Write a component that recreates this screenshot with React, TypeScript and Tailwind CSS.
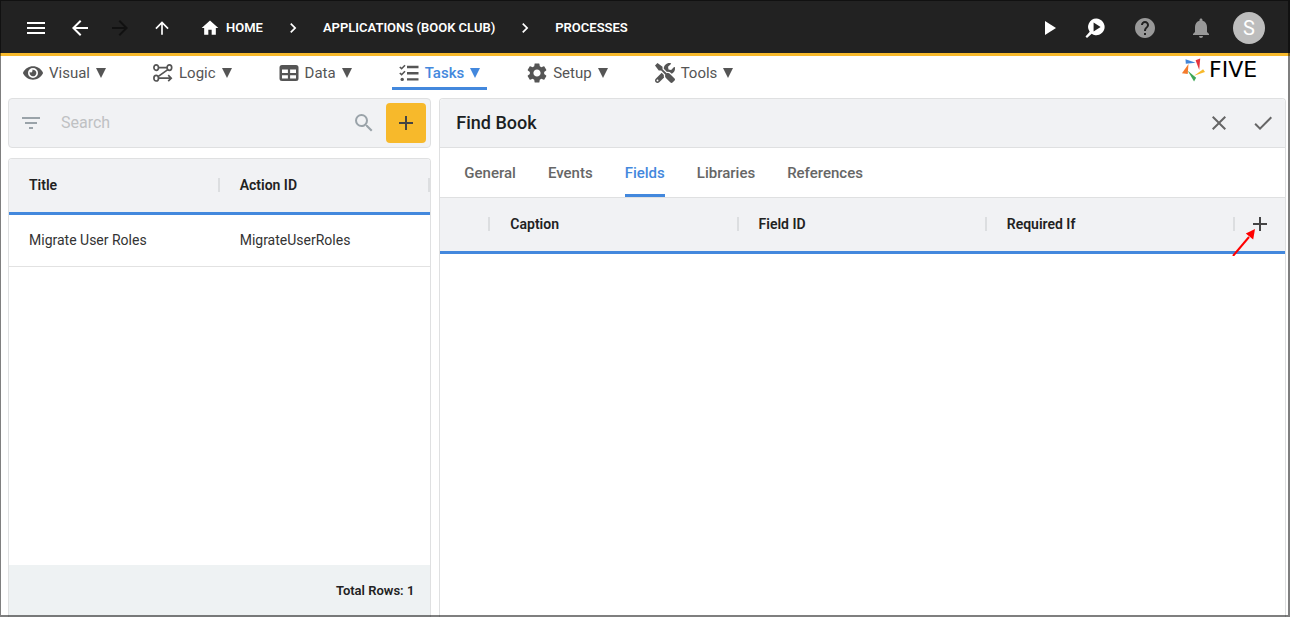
import { useState } from 'react'
import type { ReactNode } from 'react'
import { FaEye, FaTools } from 'react-icons/fa'
import {
  MdAdd, MdArrowBack, MdArrowForward, MdArrowUpward, MdCheck, MdChevronRight, MdClose, MdFilterList,
  MdHelp, MdHome, MdMenu, MdNotifications, MdPlayArrow, MdSearch, MdSettings,
} from 'react-icons/md'

function LogicIcon() {
  return (
    <svg viewBox="0 0 20 20" className="h-5 w-5" fill="none" stroke="currentColor" strokeWidth="1.7">
      <ellipse cx="3.2" cy="4.6" rx="2.3" ry="2.8" />
      <ellipse cx="16.4" cy="4.6" rx="2.3" ry="2.8" />
      <ellipse cx="3.2" cy="15.2" rx="2.3" ry="2.8" />
      <path d="M5.6 4.6h8.4M14.8 6.6L5 13.6M5.6 15.2h12.4M15.2 12.2l3 3-3 3" />
    </svg>
  )
}

function DataIcon() {
  return (
    <svg viewBox="0 0 20 20" className="h-5 w-5" fill="currentColor" fillRule="evenodd">
      <path d="M3 2h14a2.5 2.5 0 0 1 2.5 2.5v11A2.5 2.5 0 0 1 17 18H3a2.5 2.5 0 0 1-2.5-2.5v-11A2.5 2.5 0 0 1 3 2zM3 6.4v3.6h5.9V6.4zM11.1 6.4v3.6H17V6.4zM3 12.2v3.4h5.9v-3.4zM11.1 12.2v3.4H17v-3.4z" />
    </svg>
  )
}

function TasksIcon() {
  return (
    <svg viewBox="0 0 20 20" className="h-5 w-5" fill="none" stroke="currentColor">
      <path strokeWidth="2.4" d="M8 4h11.5M8 10.2h11.5M8 16.4h11.5" />
      <path strokeWidth="1.6" d="M.8 4l1.8 1.7L6 2.2M.8 10l1.8 1.7L6 8.2" />
      <circle cx="3.2" cy="16.4" r="1.7" fill="currentColor" stroke="none" />
    </svg>
  )
}

function InspectIcon() {
  return (
    <svg viewBox="0 0 20 20" className="h-5 w-5" fill="currentColor">
      <path fillRule="evenodd" d="M11.2.6a8.3 8.3 0 1 1-4.5 15.2L2 20 .5 18.5l4.2-4.7A8.3 8.3 0 0 1 11.2.6zM8.6 4.6v8.8l7-4.4z" />
    </svg>
  )
}

function FiveLogo() {
  return (
    <div className="flex items-center gap-1 text-black">
      <svg viewBox="0 0 25 25" className="h-6 w-6" aria-hidden="true">
        <path fill="#4285d8" d="M4.7 1.2l10.6 3.8L5 6z" />
        <path fill="#e5343d" d="M15.2 2.3L20 .6l-1 12z" />
        <path fill="#f7b92b" d="M13.6 18.4L23 11.8l2 2.7z" />
        <path fill="#3fa757" d="M7 13.4l8.8 7.2L13.6 24.6z" />
        <path fill="#f47b2c" d="M7.8 6.2L7 16.6 1 16z" />
      </svg>
      <span className="w-[59px] font-['DejaVu_Sans',sans-serif] text-[22px] leading-6">FIVE</span>
    </div>
  )
}

const MENUS: { label: string; icon: ReactNode }[] = [
  { label: 'Visual', icon: <FaEye className="h-5 w-5" /> },
  { label: 'Logic', icon: <LogicIcon /> },
  { label: 'Data', icon: <DataIcon /> },
  { label: 'Tasks', icon: <TasksIcon /> },
  { label: 'Setup', icon: <MdSettings className="h-6 w-6 -m-0.5" /> },
  { label: 'Tools', icon: <FaTools className="h-5 w-5" /> },
]

const TABS = ['General', 'Events', 'Fields', 'Libraries', 'References']
const FIELD_COLUMNS = ['Caption', 'Field ID', 'Required If']
const ROWS = [{ title: 'Migrate User Roles', actionId: 'MigrateUserRoles' }]

function TopBar() {
  return (
    <header className="flex h-14 items-center justify-between border-b-3 border-[#f7b92b] bg-[#222222] pl-6 pr-[25px] text-white">
      <nav aria-label="Breadcrumb" className="flex items-center pt-0.5 text-[13px] font-semibold">
        <button type="button" aria-label="Menu"><MdMenu className="h-6 w-6" /></button>
        <button type="button" aria-label="Back" className="ml-5"><MdArrowBack className="h-6 w-6" /></button>
        <button type="button" aria-label="Forward" disabled className="ml-4 text-[#111111]"><MdArrowForward className="h-6 w-6" /></button>
        <button type="button" aria-label="Up" className="ml-5"><MdArrowUpward className="h-5 w-5" /></button>
        <a href="#home" className="ml-7 flex items-center gap-1.5"><MdHome className="h-5 w-5" />HOME</a>
        <MdChevronRight className="mx-5 h-5 w-5" />
        <a href="#applications">APPLICATIONS (BOOK CLUB)</a>
        <MdChevronRight className="mx-5 h-5 w-5" />
        <a href="#processes">PROCESSES</a>
      </nav>
      <div className="flex items-center pt-0.5">
        <button type="button" aria-label="Run"><MdPlayArrow className="h-6 w-6" /></button>
        <button type="button" aria-label="Inspect" className="ml-6"><InspectIcon /></button>
        <button type="button" aria-label="Help" className="ml-7 text-[#999999]"><MdHelp className="h-6 w-6" /></button>
        <button type="button" aria-label="Notifications" className="ml-8 text-[#999999]"><MdNotifications className="h-6 w-6" /></button>
        <button type="button" aria-label="Account" className="ml-5 h-8 w-8 rounded-full bg-[#bdbdbd] text-xl leading-8">S</button>
      </div>
    </header>
  )
}

function MenuBar() {
  const [active, setActive] = useState('Tasks')
  return (
    <div className="flex h-[42px] items-start justify-between pl-4 pr-[22px]">
      <nav className="flex gap-[33px]">
        {MENUS.map(({ label, icon }) => (
          <button
            key={label}
            type="button"
            onClick={() => setActive(label)}
            className={`flex h-[34px] items-center gap-1.5 px-[7px] text-[15px] ${
              label === active
                ? 'font-medium text-[#4388dd] shadow-[inset_0_-3px_0_#4388dd] rounded-t-sm'
                : 'text-[#555555]'
            }`}
          >
            <span className="text-[#555555]">{icon}</span>
            <span>{label}</span>
            <svg viewBox="0 0 10 10" className="h-2.5 w-2.5" fill="currentColor"><path d="M0 0h10L5 10z" /></svg>
          </button>
        ))}
      </nav>
      <div className="pt-0.5"><FiveLogo /></div>
    </div>
  )
}

function ProcessList() {
  const [query, setQuery] = useState('')
  const rows = ROWS.filter((r) => r.title.toLowerCase().includes(query.toLowerCase()))
  return (
    <section className="flex min-w-0 flex-col gap-2.5">
      <div className="flex h-[50px] items-center rounded border border-[#dfe0e1] bg-[#f1f2f4] pl-2.5 pr-1 text-[#9aa3a9]">
        <button type="button" aria-label="Filter"><MdFilterList className="h-6 w-6" /></button>
        <input
          type="search"
          aria-label="Search"
          placeholder="Search"
          value={query}
          onChange={(e) => setQuery(e.target.value)}
          className="ml-4.5 min-w-0 flex-1 bg-transparent text-base text-gray-800 outline-none placeholder:text-[#bfc1c3]"
        />
        <button type="button" aria-label="Run search"><MdSearch className="h-6 w-6" /></button>
        <button type="button" aria-label="Add process" className="ml-2.5 flex h-10 w-10 items-center justify-center rounded bg-[#f7b92b] text-[#444444]">
          <MdAdd className="h-6 w-6" />
        </button>
      </div>

      <div className="flex flex-1 flex-col overflow-hidden rounded-t border border-b-0 border-[#dfe0e1]">
        <table className="w-full table-fixed text-left text-sm">
          <thead>
            <tr className="h-[54px] border-b-3 border-[#4388dd] bg-[#f1f2f4] text-[#222222]">
              <HeadCell>Title</HeadCell>
              <HeadCell>Action ID</HeadCell>
            </tr>
          </thead>
          <tbody>
            {rows.map((r) => (
              <tr key={r.actionId} className="h-[53px] border-b border-[#e2e2e2] text-[#333333]">
                <td className="p-0 pl-5">{r.title}</td>
                <td className="p-0 pl-5">{r.actionId}</td>
              </tr>
            ))}
          </tbody>
        </table>
        <div className="mt-auto flex h-[52px] items-center justify-end bg-[#eef2f3] pr-4 text-[13px] font-semibold text-[#222222]">
          Total Rows: {rows.length}
        </div>
      </div>
    </section>
  )
}

function HeadCell({ children, className = 'pl-5' }: { children?: ReactNode; className?: string }) {
  return (
    <th className={`p-0 font-semibold ${className}`}>
      <div className="flex h-5 items-center justify-between">
        <span>{children}</span>
        <span className="h-3.5 w-0.5 bg-[#dcdee0]" />
      </div>
    </th>
  )
}

function ProcessForm() {
  const [tab, setTab] = useState('Fields')
  return (
    <section className="min-w-0 rounded-t border border-b-0 border-[#dfe0e1]">
      <div className="flex h-[49px] items-center justify-between rounded-t border-b border-[#dfe0e1] bg-[#f1f2f4] pl-4 pr-2.5">
        <h1 className="text-lg font-medium text-[#1b1f23]">Find Book</h1>
        <div className="flex gap-5 text-[#666666]">
          <button type="button" aria-label="Cancel"><MdClose className="h-6 w-6" /></button>
          <button type="button" aria-label="Save"><MdCheck className="h-6 w-6" /></button>
        </div>
      </div>
      <div role="tablist" className="flex h-[50px] gap-8 border-b border-[#dfe0e1] px-6">
        {TABS.map((t) => (
          <button
            key={t}
            type="button"
            role="tab"
            aria-selected={t === tab}
            onClick={() => setTab(t)}
            className={`pt-0.5 text-[15px] font-medium ${
              t === tab ? 'rounded-t-sm text-[#4388dd] shadow-[inset_0_-3px_0_#4388dd]' : 'text-[#666666]'
            }`}
          >
            {t}
          </button>
        ))}
      </div>
      <table className="w-full table-fixed text-left text-sm">
        <thead>
          <tr className="h-[54px] border-b-3 border-[#4388dd] bg-[#f1f2f4] text-[#222222]">
            <HeadCell className="w-[50px]" />
            {FIELD_COLUMNS.map((c) => <HeadCell key={c}>{c}</HeadCell>)}
            <th className="w-[50px] p-0">
              <button type="button" aria-label="Add field" className="relative mx-auto block text-[#444444]">
                <MdAdd className="h-6 w-6" />
                <svg viewBox="0 0 24 28" className="absolute right-4 top-4 h-7 w-6" aria-hidden="true">
                  <path stroke="#ff0000" strokeWidth="2" d="M1 28L17 9" />
                  <path fill="#ff0000" d="M23 1l-1.8 10.6-7.4-6.2z" />
                </svg>
              </button>
            </th>
          </tr>
        </thead>
      </table>
    </section>
  )
}

export default function App() {
  return (
    <div className="relative flex min-h-screen flex-col bg-white font-[Roboto,sans-serif]">
      <TopBar />
      <MenuBar />
      <main className="grid flex-1 grid-cols-[1fr_2fr] gap-2 pl-2 pr-1">
        <ProcessList />
        <ProcessForm />
      </main>
      {/* window frame, tints whatever is beneath it */}
      <div className="pointer-events-none absolute inset-0 border-b-2 border-l border-r-2 border-t border-black/50" />
    </div>
  )
}
